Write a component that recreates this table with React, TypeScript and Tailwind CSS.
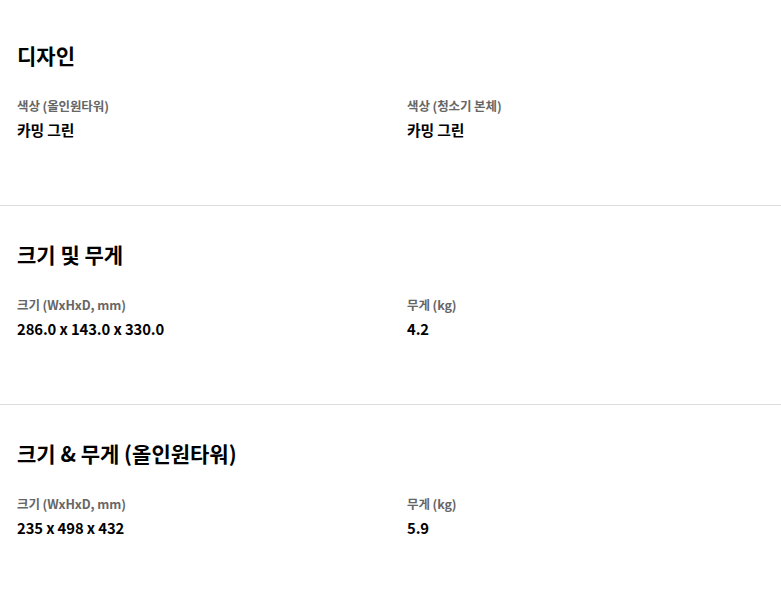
const font = { fontFamily: '"Noto Sans CJK KR", "Noto Sans", sans-serif' };

type Spec = { label: string; value: string };

const sections: { title: string; specs: Spec[] }[] = [
  {
    title: "디자인",
    specs: [
      { label: "색상 (올인원타워)", value: "카밍 그린" },
      { label: "색상 (청소기 본체)", value: "카밍 그린" },
    ],
  },
  {
    title: "크기 및 무게",
    specs: [
      { label: "크기 (WxHxD, mm)", value: "286.0 x 143.0 x 330.0" },
      { label: "무게 (kg)", value: "4.2" },
    ],
  },
  {
    title: "크기 & 무게 (올인원타워)",
    specs: [
      { label: "크기 (WxHxD, mm)", value: "235 x 498 x 432" },
      { label: "무게 (kg)", value: "5.9" },
    ],
  },
];

export default function App() {
  return (
    <div className="w-[781px] min-h-[594px] bg-white text-black" style={font}>
      {sections.map((s, i) => (
        <section
          key={s.title}
          className={`pl-[17px] pb-[65px] ${i === 0 ? "pt-[40px]" : "pt-[33px]"} ${
            i < sections.length - 1 ? "border-b border-[#dddddd]" : ""
          }`}
        >
          <h2 className="text-[21px] leading-[30px] font-bold">{s.title}</h2>
          <div className="grid grid-cols-[390px_1fr] mt-[27px]">
            {s.specs.map((sp) => (
              <div key={sp.label}>
                <p className="text-[12.5px] leading-[18px] font-bold text-[#666666] tracking-[-0.1px]">{sp.label}</p>
                <p className="mt-[5px] text-[14.8px] leading-[20px] font-bold tracking-[-0.1px]">{sp.value}</p>
              </div>
            ))}
          </div>
        </section>
      ))}
    </div>
  );
}
